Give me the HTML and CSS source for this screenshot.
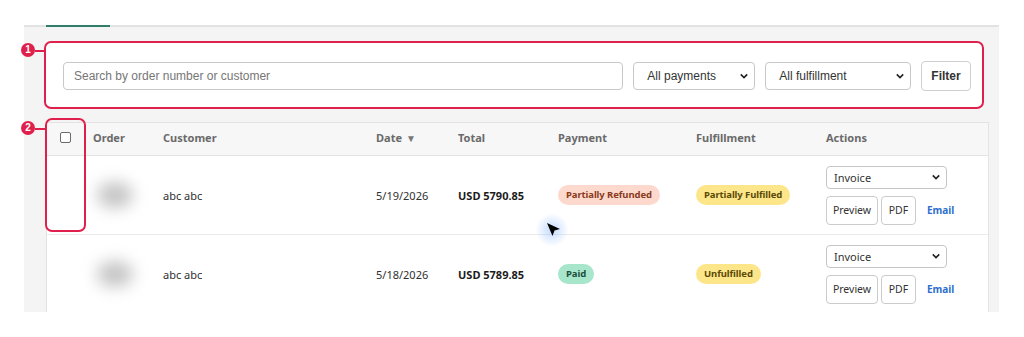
FILE: index.html
```html
<!DOCTYPE html>
<html>
<head>
<meta charset="utf-8">
<link rel="stylesheet" href="styles.css">
</head>
<body>
<div class="panel">
  <div class="tabs"><div class="tab-active"></div></div>

  <div class="filter-card">
    <input class="search" type="text" placeholder="Search by order number or customer">
    <div class="select sel-pay"><span>All payments</span><svg viewBox="0 0 10 6"><path d="M1 1l4 4 4-4" /></svg></div>
    <div class="select sel-ful"><span>All fulfillment</span><svg viewBox="0 0 10 6"><path d="M1 1l4 4 4-4" /></svg></div>
    <button class="filter-btn">Filter</button>
  </div>

  <div class="table">
    <div class="row head">
      <div class="c cb"><span class="checkbox"></span></div>
      <div class="c">Order</div>
      <div class="c">Customer</div>
      <div class="c">Date <span class="arrow">▼</span></div>
      <div class="c">Total</div>
      <div class="c">Payment</div>
      <div class="c">Fulfillment</div>
      <div class="c">Actions</div>
    </div>
    <div class="row">
      <div class="c cb"></div>
      <div class="c"><span class="blob"></span></div>
      <div class="c">abc abc</div>
      <div class="c">5/19/2026</div>
      <div class="c total">USD 5790.85</div>
      <div class="c"><span class="badge refunded">Partially Refunded</span></div>
      <div class="c"><span class="badge partial">Partially Fulfilled</span></div>
      <div class="c actions">
        <div class="mini-select"><span>Invoice</span><svg viewBox="0 0 10 6"><path d="M1 1l4 4 4-4" /></svg></div>
        <div class="btns"><button class="sm">Preview</button><button class="sm pdf">PDF</button><a class="email">Email</a></div>
      </div>
    </div>
    <div class="row">
      <div class="c cb"></div>
      <div class="c"><span class="blob"></span></div>
      <div class="c">abc abc</div>
      <div class="c">5/18/2026</div>
      <div class="c total">USD 5789.85</div>
      <div class="c"><span class="badge paid">Paid</span></div>
      <div class="c"><span class="badge unful">Unfulfilled</span></div>
      <div class="c actions">
        <div class="mini-select"><span>Invoice</span><svg viewBox="0 0 10 6"><path d="M1 1l4 4 4-4" /></svg></div>
        <div class="btns"><button class="sm">Preview</button><button class="sm pdf">PDF</button><a class="email">Email</a></div>
      </div>
    </div>
  </div>
</div>

<div class="mark box1"></div>
<div class="dot dot1">1</div><div class="leader l1"></div>
<div class="mark box2"></div>
<div class="dot dot2">2</div><div class="leader l2"></div>

<div class="cursor">
  <div class="glow"></div>
  <svg viewBox="0 0 14 14" width="14" height="14"><path d="M0 0 L13 6 L7.5 7.5 L5.5 13 Z" fill="#000"/></svg>
</div>
</body>
</html>
```

FILE: styles.css
```css
* { box-sizing: border-box; }
html, body { margin: 0; padding: 0; background: #fff; }
body { width: 1024px; height: 337px; overflow: hidden; position: relative; font-family: "Noto Sans", "Open Sans", sans-serif; }

.panel {
  margin: 25px 0 0 24px;
  width: 975px;
  height: 287px;
  background: #f4f4f4;
  overflow: hidden;
  padding-left: 22px;
}
.tabs {
  height: 2px;
  background: #e2e2e2;
  margin-left: -22px;
  padding-left: 22px;
}
.tab-active { width: 64px; height: 2px; background: #2f7d6a; }

.filter-card {
  margin-top: 16px;
  width: 936px;
  height: 66px;
  background: #fff;
  display: flex;
  align-items: center;
  padding: 0 11px 0 17px;
  font-family: "Liberation Sans", Arial, sans-serif;
  font-size: 12px;
}
.search {
  width: 561px;
  height: 28px;
  border: 1px solid #c9c9c9;
  border-radius: 4px;
  padding: 0 10px;
  font-family: inherit;
  font-size: 12px;
  color: #333;
  outline: none;
}
.search::placeholder { color: #767676; }
.select {
  height: 28px;
  border: 1px solid #c9c9c9;
  border-radius: 4px;
  display: flex;
  align-items: center;
  justify-content: space-between;
  padding: 0 6px 0 13px;
  color: #333;
  background: #fff;
}
.select svg, .mini-select svg { width: 8px; height: 6px; fill: none; stroke: #222; stroke-width: 2; }
.sel-pay { width: 122px; margin-left: 10px; }
.sel-ful { width: 146px; margin-left: 10px; }
.filter-btn {
  margin-left: 10px;
  width: 50px;
  height: 30px;
  border: 1px solid #cfcfcf;
  border-radius: 4px;
  background: #fff;
  font-family: inherit;
  font-size: 12px;
  font-weight: bold;
  color: #333;
  padding: 0;
}

.table {
  margin-top: 13px;
  width: 943px;
  border: 1px solid #e3e3e3;
  border-bottom: none;
  background: #fff;
  font-size: 11px;
  color: #303030;
}
.row {
  display: grid;
  grid-template-columns: 46px 70px 213px 82px 100px 138px 130px 1fr;
  height: 79px;
  align-items: center;
  border-bottom: 1px solid #ececec;
}
.row.head {
  height: 33px;
  padding-bottom: 3px;
  background: #f7f7f7;
  border-bottom: 1px solid #e3e3e3;
  font-weight: 700;
  color: #6a6a6a;
}
.c { white-space: nowrap; display: flex; align-items: center; }
.cb { padding-left: 13px; height: 100%; }
.checkbox { width: 11px; height: 11px; border: 1px solid #6b6b6b; border-radius: 2px; background: #fff; }
.arrow { font-size: 10px; margin-left: 4px; color: #777; }
.total { font-weight: 700; color: #1b1b1b; }

.blob {
  display: block;
  width: 36px;
  height: 26px;
  margin-left: 4px;
  background: #c4c4c4;
  border-radius: 50%;
  filter: blur(8px);
}

.badge {
  display: inline-block;
  height: 20px;
  line-height: 20px;
  padding: 0 8px;
  border-radius: 10px;
  font-size: 9.5px;
  font-weight: 700;
  letter-spacing: -0.1px;
}
.refunded { background: #fdd9cd; color: #8a3b1c; }
.partial { background: #fde68a; color: #5b4a06; }
.paid { background: #a8e6cc; color: #1d4f3c; }
.unful { background: #fde68a; color: #5b4a06; }

.actions { flex-direction: column; align-items: flex-start; gap: 7px; font-size: 11px; }
.mini-select {
  width: 121px; height: 23px;
  border: 1px solid #c6c6c6;
  border-radius: 4px;
  display: flex; align-items: center; justify-content: space-between;
  padding: 0 6px 0 7px;
  color: #333;
}
.btns { display: flex; align-items: center; gap: 3px; }
.sm {
  height: 29px; width: 52px;
  border: 1px solid #cbcbcb;
  border-radius: 4px;
  background: #fff;
  font-family: "Noto Sans", sans-serif;
  font-size: 10.5px;
  color: #333;
  padding: 0;
}
.sm.pdf { width: 35px; }
.email { margin-left: 8px; color: #2c6ecb; font-weight: 700; font-size: 10px; }

.mark { position: absolute; border: 2.5px solid #e0204c; border-radius: 7px; }
.box1 { left: 44px; top: 41px; width: 940px; height: 68px; }
.box2 { left: 45px; top: 118px; width: 41px; height: 114px; }
.dot {
  position: absolute;
  width: 14px; height: 14px;
  border-radius: 50%;
  background: #e0204c;
  color: #fff;
  font-family: "Liberation Sans", Arial, sans-serif;
  font-size: 10px; font-weight: bold;
  line-height: 14px; text-align: center;
}
.dot1 { left: 21px; top: 43px; }
.dot2 { left: 21px; top: 121px; }
.leader { position: absolute; height: 2px; width: 10px; background: #e0204c; }
.l1 { left: 35px; top: 50px; }
.l2 { left: 35px; top: 128px; }

.cursor { position: absolute; left: 547px; top: 223px; width: 14px; height: 14px; }
.cursor svg { position: relative; display: block; }
.glow {
  position: absolute; left: -12px; top: -10px; width: 34px; height: 34px;
  border-radius: 50%;
  background: radial-gradient(circle, rgba(80,150,255,0.35) 0%, rgba(80,150,255,0.12) 45%, rgba(80,150,255,0) 70%);
}
```
